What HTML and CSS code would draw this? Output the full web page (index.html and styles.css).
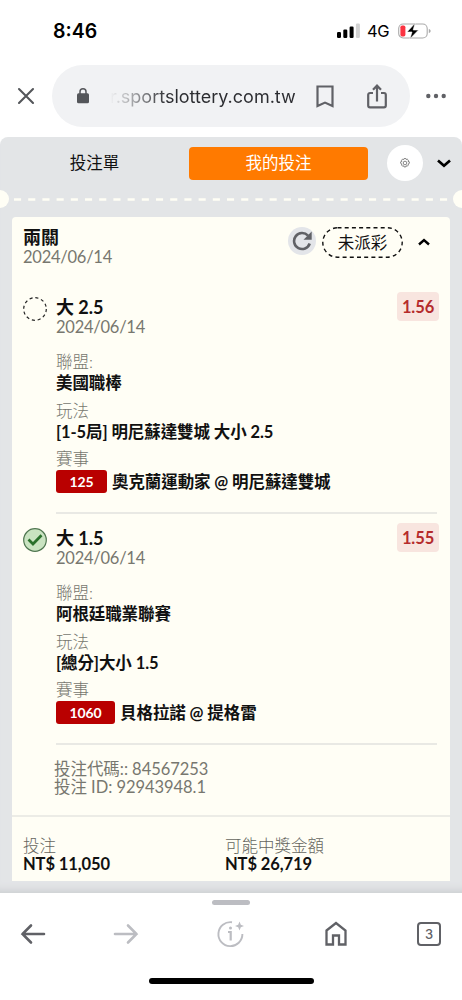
FILE: index.html
```html
<!DOCTYPE html>
<html lang="zh-Hant">
<head>
  <meta charset="UTF-8">
  <title>我的投注</title>
  <link rel="stylesheet" href="styles.css">
</head>
<body>

  <header class="status-bar">
    <div class="time">8:46</div>
    <div class="status-icons">
      <svg width="23" height="16" viewBox="0 0 23 16">
        <rect x="0" y="9" width="4" height="6" rx="1.2"/>
        <rect x="6.3" y="6.5" width="4" height="8.5" rx="1.2"/>
        <rect x="12.6" y="3.5" width="4" height="11.5" rx="1.2"/>
        <rect x="18.9" y="0.5" width="4" height="14.5" rx="1.2" fill="#d2d2d2"/>
      </svg>
      <span class="network">4G</span>
      <svg width="33" height="16" viewBox="0 0 33 16">
        <rect x="0.7" y="1" width="28.5" height="14" rx="4.5" fill="#fff" stroke="#aaa" stroke-width="1.1"/>
        <path d="M30.8 6v4c1.2-.4 1.8-1.1 1.8-2s-.6-1.6-1.8-2z" fill="#aaa"/>
        <rect x="2.4" y="2.6" width="5" height="10.8" rx="1.7" fill="#fb3341"/>
        <path d="M17 .3 9 9h5l-2 6.7L20.5 7h-5.3L17 .3z" stroke="#fff" stroke-width=".6"/>
      </svg>
    </div>
  </header>

  <div class="browser-bar">
    <svg class="close" width="18" height="18" viewBox="0 0 18 18"><path d="M2 2l14 14M16 2L2 16"/></svg>
    <div class="address">
      <svg class="lock" width="12" height="16" viewBox="0 0 12 16">
        <rect x="0" y="5.3" width="12" height="10" rx="1.5" fill="#54565a"/>
        <path d="M3 6V3.8a3 3 0 0 1 6 0V6" fill="none" stroke="#54565a" stroke-width="1.5"/>
      </svg>
      <span class="url">r.sportslottery.com.tw</span>
      <svg class="line bookmark" width="18" height="23" viewBox="0 0 18 23"><path d="M1.5 1.500h15v19.5L9 17.6 1.5 21z"/></svg>
      <svg class="line share" width="20" height="25" viewBox="0 0 20 25">
        <path d="M6 9H3a1.8 1.8 0 0 0-1.8 1.8v10.7A1.8 1.8 0 0 0 3 23.300h14a1.8 1.8 0 0 0 1.8-1.8V10.800A1.8 1.8 0 0 0 17 9h-3M10 17.500V2M6 5.800l4-4.100 4 4.100"/>
      </svg>
    </div>
    <svg class="more" width="20" height="6" viewBox="0 0 20 6"><circle cx="2.3" cy="3" r="2.2"/><circle cx="10" cy="3" r="2.2"/><circle cx="17.7" cy="3" r="2.2"/></svg>
  </div>

  <main class="page">
    <nav class="tabs">
      <div class="tab">投注單</div>
      <div class="tab active">我的投注</div>
      <div class="settings">
        <svg width="10" height="10" viewBox="0 0 10 10" fill="none" stroke="#555" stroke-width=".7">
          <path d="M4.200.5h1.600l.4 1 1-.4 1.200 1.100-.4 1.100 1.300.5v1.600l-1.200.6.3 1-1.100 1.200-1.200-.4-.4 1.200H4.200l-.5-1.200-1.100.4-1.100-1.200.4-1-1.200-.6V3.800l1.200-.5-.4-1.100L2.600 1.100l1.200.4z"/>
          <circle cx="5" cy="5" r="1.8"/>
        </svg>
      </div>
      <svg class="chevron" width="14" height="9" viewBox="0 0 14 9"><path d="M1 1.500l6 5.200 6-5.200"/></svg>
    </nav>

    <div class="perforation">
      <svg width="434" height="3" viewBox="0 0 434 3"><path d="M0 1.500H434"/></svg>
    </div>

    <section class="card">
      <div class="card-head">
        <div class="heading">
          <h3>兩關</h3>
          <div class="date">2024/06/14</div>
        </div>
        <div class="refresh">
          <svg width="20" height="20" viewBox="0 0 20 20">
            <path d="M16 4.600A8 8 0 1 0 17.700 12.500" fill="none" stroke="#606166" stroke-width="2.6"/>
            <path d="M19.700.6v8.200h-8.200z" fill="#606166"/>
          </svg>
        </div>
        <div class="pill">
          <svg width="81" height="31" viewBox="0 0 81 31"><rect x=".8" y=".8" width="79.400" height="29.400" rx="14.700"/></svg>
          <span>未派彩</span>
        </div>
        <svg class="chevron up" width="12" height="8" viewBox="0 0 12 8"><path d="M1 6.500l5-4.500 5 4.500"/></svg>
      </div>

      <article class="leg">
        <svg class="mark" width="24" height="24" viewBox="0 0 24 24">
          <circle cx="12" cy="12" r="11.3" fill="none" stroke="#222" stroke-width="1.2" stroke-dasharray="3.1 2.817"/>
        </svg>
        <div class="leg-body">
          <div class="leg-top">
            <div class="heading">
              <h4>大 2.5</h4>
              <div class="date">2024/06/14</div>
            </div>
            <div class="odds">1.56</div>
          </div>
          <dl>
            <dt>聯盟:</dt>
            <dd>美國職棒</dd>
            <dt>玩法</dt>
            <dd>[1-5局] 明尼蘇達雙城 大小 2.5</dd>
            <dt>賽事</dt>
            <dd class="match"><span class="code">125</span>奧克蘭運動家 @ 明尼蘇達雙城</dd>
          </dl>
        </div>
      </article>

      <article class="leg">
        <svg class="mark" width="24" height="24" viewBox="0 0 24 24">
          <circle cx="12" cy="12" r="11.3" fill="#c9e3c1" stroke="#4f7650" stroke-width="1.2"/>
          <path d="M5.500 11.500l4.500 4.500 8.500-8.700" fill="none" stroke="#29702b" stroke-width="2.7"/>
        </svg>
        <div class="leg-body">
          <div class="leg-top">
            <div class="heading">
              <h4>大 1.5</h4>
              <div class="date">2024/06/14</div>
            </div>
            <div class="odds">1.55</div>
          </div>
          <dl>
            <dt>聯盟:</dt>
            <dd>阿根廷職業聯賽</dd>
            <dt>玩法</dt>
            <dd>[總分]大小 1.5</dd>
            <dt>賽事</dt>
            <dd class="match"><span class="code">1060</span>貝格拉諾 @ 提格雷</dd>
          </dl>
        </div>
      </article>

      <div class="ids">
        <div>投注代碼:: 84567253</div>
        <div>投注 ID: 92943948.1</div>
      </div>

      <div class="totals">
        <div>
          <div class="label">投注</div>
          <div class="amount">NT$ 11,050</div>
        </div>
        <div>
          <div class="label">可能中獎金額</div>
          <div class="amount">NT$ 26,719</div>
        </div>
      </div>
    </section>
  </main>

  <footer class="toolbar">
    <div class="grabber"></div>
    <div class="buttons">
      <svg class="nav" width="26" height="22" viewBox="0 0 26 22"><path d="M24 11H2.500M11 2.500L2.500 11l8.500 8.500"/></svg>
      <svg class="nav off" width="26" height="22" viewBox="0 0 26 22"><path d="M2 11h21.500M15 2.500l8.500 8.500-8.500 8.500"/></svg>
      <svg width="28" height="28" viewBox="0 0 28 28" fill="none" stroke="#bcbdc2" stroke-width="1.9">
        <path d="M15 2.200A12 12 0 1 0 25.400 14"/>
        <path d="M11 12h2.700v8.500" stroke-width="2.2"/>
        <circle cx="13.500" cy="8" r="1.5" fill="#bcbdc2" stroke="none"/>
        <path d="M22.500 1.500l1.300 3.200 3.200 1.300-3.200 1.300-1.300 3.200-1.300-3.200L18 6l3.200-1.300z" fill="#bcbdc2" stroke="none"/>
      </svg>
      <svg width="22" height="25" viewBox="0 0 22 25"><path d="M1.500 9.500L11 2l9.500 7.500v14H14v-9H8v9H1.500z" fill="none" stroke="#606166" stroke-width="2.3"/></svg>
      <div class="tab-count">3</div>
    </div>
    <div class="home-indicator"></div>
  </footer>

</body>
</html>
```
FILE: styles.css
```css
* {
  box-sizing: border-box;
}
body {
  margin: 0;
  width: 462px;
  height: 1000px;
  overflow: hidden;
  display: flex;
  flex-direction: column;
  background: #fff;
  color: #111;
  font-family: Lato, "Noto Sans CJK TC", sans-serif;
  font-size: 16.5px;
}
svg {
  display: block;
  flex: none;
}
h3, h4, dl, dd {
  margin: 0;
}

/* phone status bar */
.status-bar {
  height: 65px;
  padding: 0 31px 4px 53px;
  display: flex;
  align-items: center;
  justify-content: space-between;
  font-family: Inter, sans-serif;
}
.time {
  color: #000;
  font-size: 19.5px;
  font-weight: 600;
}
.status-icons {
  display: flex;
  align-items: center;
}
.network {
  margin: 0 8px 0 7px;
  width: 23px;
  color: #000;
  font-size: 16.5px;
  letter-spacing: -0.3px;
}

/* browser address bar */
.browser-bar {
  height: 62px;
  margin-bottom: 10px;
  padding: 0 16px 0 17px;
  display: flex;
  align-items: center;
}
.close {
  margin-right: 17px;
  fill: none;
  stroke: #54565a;
  stroke-width: 2.1;
  stroke-linecap: round;
}
.address {
  width: 358px;
  height: 62px;
  padding-left: 25px;
  display: flex;
  align-items: center;
  background: #f1f2f4;
  border-radius: 31px;
}
.url {
  margin-left: 21px;
  width: 188px;
  font-family: Inter, sans-serif;
  font-size: 18px;
  white-space: nowrap;
  color: transparent;
  background: linear-gradient(90deg, #f1f2f4, #2b2c30 58px);
  background-clip: text;
  -webkit-background-clip: text;
}
.line {
  fill: none;
  stroke: #606166;
  stroke-width: 2.2;
}
.bookmark {
  margin-left: 18px;
}
.share {
  margin-left: 33px;
}
.more {
  margin-left: 16px;
  fill: #606166;
}

.page {
  height: 756px;
  background: #e3e5e7;
  border-radius: 8px 8px 0 0;
  box-shadow: inset 0 -10px 8px -8px #c9cbce;
  overflow: hidden;
}
.tabs {
  height: 52px;
  display: flex;
  align-items: center;
}
.tab {
  width: 189px;
  height: 33px;
  line-height: 33px;
  text-align: center;
  border-radius: 4px;
}
.tab.active {
  width: 179px;
  background: #ff7a00;
  color: #fff;
}
.settings {
  margin-left: 19px;
  width: 36px;
  height: 36px;
  display: flex;
  align-items: center;
  justify-content: center;
  background: #fff;
  border-radius: 50%;
}
.chevron {
  margin-left: 14px;
  fill: none;
  stroke: #000;
  stroke-width: 2.7;
}

/* ticket edge between the tabs and the card */
.perforation {
  height: 20px;
  display: flex;
  align-items: center;
  justify-content: space-between;
}
.perforation::before,
.perforation::after {
  content: "";
  width: 9px;
  height: 18px;
  background: #fffef5;
  border-radius: 0 9px 9px 0;
}
.perforation::after {
  border-radius: 9px 0 0 9px;
}
.perforation path {
  stroke: #fffef5;
  stroke-width: 2.5;
  stroke-dasharray: 7.1 7.1;
}

.card {
  margin: 8px 12px 0;
  height: 664px;
  background: #fffef5;
  border-radius: 4px 4px 0 0;
}
.card-head {
  height: 75px;
  padding: 10px 20px 0 11px;
  display: flex;
  align-items: flex-start;
}
.heading {
  flex: 1;
}
h3 {
  font-size: 18px;
  line-height: 20px;
  font-weight: 700;
}
h4 {
  font-size: 18px;
  line-height: 20px;
  font-weight: 700;
}
.date {
  font-size: 16.5px;
  line-height: 20px;
  letter-spacing: -0.25px;
  color: #77776f;
}
.refresh {
  width: 28px;
  height: 28px;
  display: flex;
  align-items: center;
  justify-content: center;
  background: #e3e5e9;
  border-radius: 50%;
}
.pill {
  margin-left: 6px;
  width: 81px;
  height: 31px;
  display: grid;
}
.pill svg,
.pill span {
  grid-area: 1 / 1;
}
.pill span {
  line-height: 33px;
  text-align: center;
}
.pill rect {
  fill: none;
  stroke: #111;
  stroke-width: 1.4;
  stroke-dasharray: 4 3.2;
}
.chevron.up {
  margin: 11px 0 0 15px;
  stroke-width: 2.4;
}

.leg {
  height: 231px;
  padding: 0 13px 0 11px;
  display: flex;
  gap: 9px;
}
.mark {
  margin-top: 5px;
}
.leg-body {
  flex: 1;
  height: 222px;
  border-bottom: 2px solid #e9e9e4;
}
.leg-top {
  height: 59px;
  display: flex;
}
.leg-top .heading {
  padding-top: 5px;
}
.odds {
  width: 42px;
  height: 29px;
  margin-right: -2px;
  line-height: 30px;
  text-align: center;
  font-weight: 700;
  letter-spacing: -0.1px;
  color: #b52b2b;
  background: #f8e5df;
  border-radius: 4px;
}
dl {
  padding-top: 1px;
}
dt {
  line-height: 21px;
  color: #77776f;
  font-weight: 300;
}
dd {
  height: 20px;
  line-height: 20px;
  margin-bottom: 7.6px;
  font-weight: 700;
  letter-spacing: -0.1px;
}
.match {
  height: 23px;
  display: flex;
  align-items: center;
  gap: 5px;
  margin: 0;
}
.code {
  height: 23px;
  padding: 0 13.5px;
  line-height: 24px;
  font-size: 14px;
  letter-spacing: -0.1px;
  color: #fff;
  background: #b90000;
  border-radius: 3px;
}

.ids {
  height: 61px;
  padding: 6px 0 0 42px;
  line-height: 18px;
  letter-spacing: -0.05px;
  color: #77776f;
}
.totals {
  padding: 20px 11px 0;
  display: grid;
  grid-template-columns: 202px 1fr;
  border-top: 2px solid #ecece6;
}
.label {
  line-height: 18px;
  font-weight: 300;
  color: #66665f;
}
.amount {
  line-height: 18px;
  font-weight: 700;
  letter-spacing: -0.1px;
}

/* browser bottom toolbar */
.toolbar {
  height: 107px;
  padding-top: 7px;
  display: flex;
  flex-direction: column;
  align-items: center;
  background: #fff;
}
.grabber {
  width: 38px;
  height: 5px;
  background: #bcbdc2;
  border-radius: 3px;
}
.buttons {
  width: 489px;
  height: 57px;
  display: grid;
  grid-template-columns: 93px 93px 117px 93px 93px;
  align-items: center;
  justify-items: center;
}
.nav {
  fill: none;
  stroke: #606166;
  stroke-width: 2.6;
  stroke-linecap: round;
}
.nav.off {
  stroke: #bcbdc2;
}
.tab-count {
  width: 24px;
  height: 24px;
  border: 2px solid #606166;
  border-radius: 4px;
  line-height: 20px;
  text-align: center;
  font-family: Inter, sans-serif;
  font-size: 13px;
  font-weight: 500;
  color: #606166;
}
.home-indicator {
  margin-top: 16px;
  width: 165px;
  height: 6px;
  background: #000;
  border-radius: 3px;
}
```
